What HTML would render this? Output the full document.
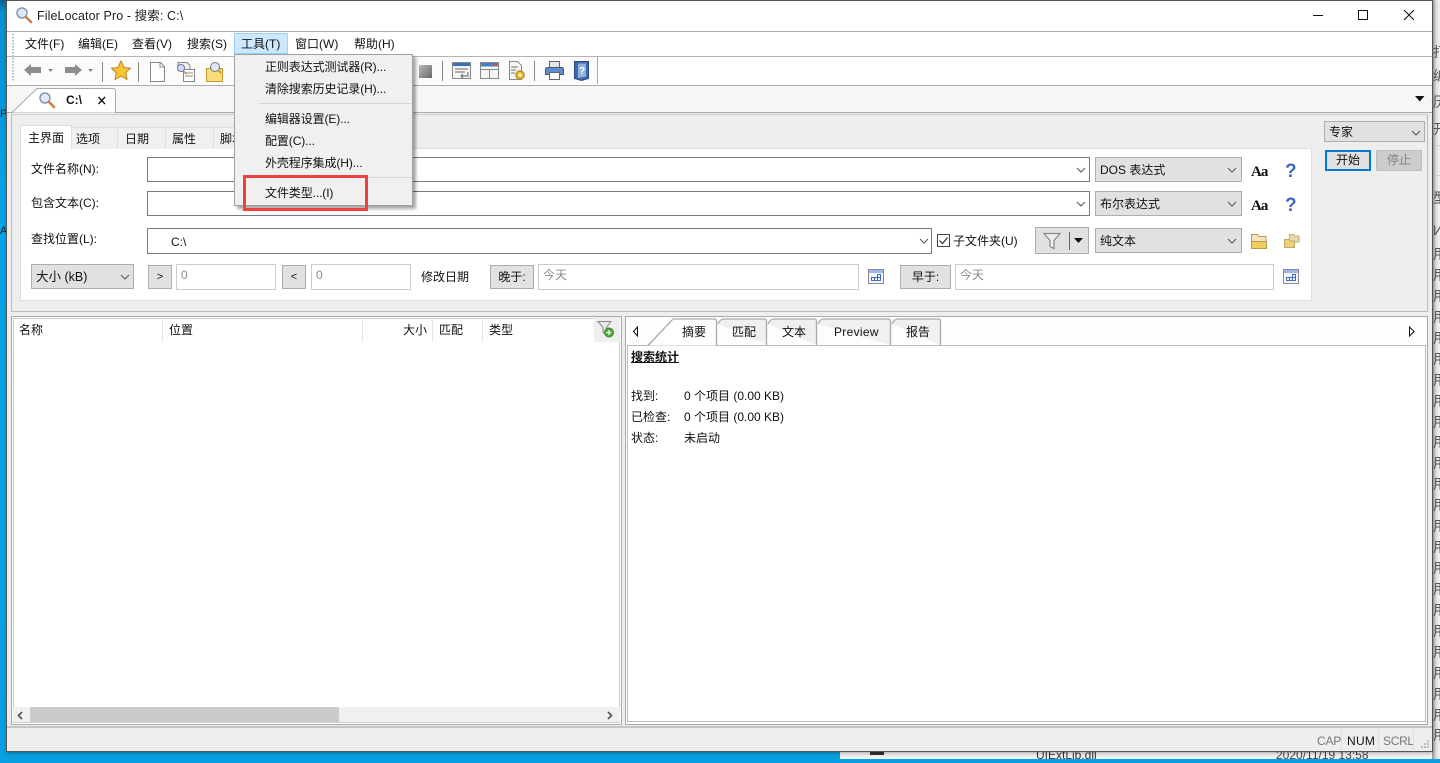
<!DOCTYPE html>
<html lang="zh"><head><meta charset="utf-8"><title>FileLocator Pro</title>
<style>
html,body{margin:0;padding:0}
body{width:1440px;height:759px;overflow:hidden;position:relative;background:#0a9fe2;font-family:"Liberation Sans","Noto Sans CJK SC",sans-serif;font-size:12px;color:#111}
.a,.t,svg.a{position:absolute}
.t{white-space:nowrap;line-height:16px}
.sel{position:absolute;background:#e1e1e1;border:1px solid #adadad;box-sizing:border-box;white-space:nowrap;padding-left:4px}
.inp{position:absolute;background:#fff;border:1px solid #7a7a7a;box-sizing:border-box}
.dis{position:absolute;background:#fff;border:1px solid #ccc;box-sizing:border-box;color:#8a8a8a;padding-left:4px;line-height:21px}
.btn{position:absolute;background:#e1e1e1;border:1px solid #adadad;box-sizing:border-box;text-align:center}
.tab{position:absolute;box-sizing:border-box;text-align:center;white-space:nowrap;overflow:hidden}
.mi{position:absolute;left:265px;white-space:nowrap;line-height:16px;letter-spacing:-.1px}
</style></head><body>
<!-- desktop behind -->
<div class="a" style="left:0;top:0;width:7px;height:759px;background:linear-gradient(#0b5f8a 0,#0a8fd0 12px,#04a3e8 200px,#0a9fe2)"></div>
<div class="a" style="left:0;top:751px;width:840px;height:8px;background:#0aa0e0"></div>
<div class="a" style="left:840px;top:751px;width:600px;height:8px;background:#f4f4f4"></div>
<div class="a" style="left:1432px;top:0;width:8px;height:759px;background:linear-gradient(90deg,#8f8f8f,#dcdcdc 4px,#f2f2f2)"></div>
<div class="a" style="left:1436px;top:145px;width:4px;height:1px;background:#ccc"></div>
<div class="a" style="left:1436px;top:175px;width:4px;height:1px;background:#ccc"></div>
<div class="a" style="left:0;top:108px;font-size:11px;color:#222;width:7px;overflow:hidden">Po</div>
<div class="a" style="left:0;top:225px;font-size:11px;color:#222;width:7px;overflow:hidden">A</div>
<div class="t" style="left:1276px;top:747px;color:#444">2020/11/19 13:58</div>
<div class="t" style="left:1036px;top:747px;color:#333">UIExtLib.dll</div>
<div class="a" style="left:870px;top:751px;width:14px;height:4px;background:#333"></div>
<div class="a" style="left:1433px;top:0;width:7px;height:759px;overflow:hidden;color:#555;font-size:14px">
<div class="a" style="top:42px">打</div><div class="a" style="top:66px">编</div><div class="a" style="top:92px">历</div><div class="a" style="top:119px">开</div><div class="a" style="top:188px">型</div><div class="a" style="top:222px">И</div>
<div class="a" style="top:244px">用</div><div class="a" style="top:265px">用</div><div class="a" style="top:286px">用</div><div class="a" style="top:307px">用</div><div class="a" style="top:328px">用</div><div class="a" style="top:349px">用</div><div class="a" style="top:370px">用</div><div class="a" style="top:391px">用</div><div class="a" style="top:412px">用</div><div class="a" style="top:432px">用</div><div class="a" style="top:453px">用</div><div class="a" style="top:474px">用</div><div class="a" style="top:495px">用</div><div class="a" style="top:516px">用</div><div class="a" style="top:537px">用</div><div class="a" style="top:558px">用</div><div class="a" style="top:579px">用</div><div class="a" style="top:600px">用</div><div class="a" style="top:621px">用</div><div class="a" style="top:642px">用</div><div class="a" style="top:663px">用</div><div class="a" style="top:684px">用</div><div class="a" style="top:705px">用</div><div class="a" style="top:725px">用</div></div>

<!-- window -->
<div class="a" style="left:7px;top:0;width:1425px;height:751px;background:#eee;box-shadow:0 0 0 1px #555,0 2px 4px rgba(0,0,0,.35);overflow:hidden"></div>
<div class="a" style="left:7px;top:0;width:1425px;height:31px;background:#fff;border-top:1px solid #555;box-sizing:border-box"></div>
<svg class="a" style="left:15px;top:6px" width="18" height="18" viewBox="0 0 18 18"><circle cx="7" cy="7" r="5" fill="#dfe8f8" stroke="#8a94b4" stroke-width="1.5"/><path d="M11 11l5 5" stroke="#c9824a" stroke-width="2.6" stroke-linecap="round"/></svg>
<div class="t" style="left:37px;top:8px;font-size:12.5px;letter-spacing:.1px;color:#222">FileLocator Pro - 搜索: C:\</div>
<svg class="a" style="left:1310px;top:8px" width="122" height="16" fill="none" stroke="#111"><path d="M3 7.500h10"/><rect x="48.500" y="2.500" width="9" height="9" stroke-width="1"/><path d="M94 2l10 10M104 2l-10 10"/></svg>
<div class="a" style="left:7px;top:31px;width:1425px;height:1px;background:#aaa"></div>
<!-- menubar -->
<div class="a" style="left:7px;top:32px;width:1425px;height:24px;background:#fff;border-bottom:1px solid #b4b4b4"></div>
<div class="a" style="left:12px;top:34px;width:2px;height:48px;background-image:linear-gradient(#bbb 50%,transparent 50%);background-size:2px 3px"></div>
<div class="a" style="left:234px;top:33px;width:52px;height:19px;background:#cce8ff;border:1px solid #99d1ff"></div>
<div class="t" style="left:25px;top:36px">文件(F)</div>
<div class="t" style="left:78px;top:36px">编辑(E)</div>
<div class="t" style="left:132px;top:36px">查看(V)</div>
<div class="t" style="left:187px;top:36px">搜索(S)</div>
<div class="t" style="left:241px;top:36px">工具(T)</div>
<div class="t" style="left:295px;top:36px">窗口(W)</div>
<div class="t" style="left:354px;top:36px">帮助(H)</div>
<!-- toolbar -->
<div class="a" style="left:7px;top:57px;width:1425px;height:28px;background:#fff;border-bottom:1px solid #aaa"></div>
<div class="a" style="left:14px;top:57px;width:583px;height:27px;background:#fbfbfb;border-right:1px solid #aaa"></div>
<div class="a" style="left:12px;top:34px;width:2px;height:48px;background-image:linear-gradient(#bbb 50%,transparent 50%);background-size:2px 3px"></div>
<svg class="a" style="left:20px;top:57px" width="590" height="28" viewBox="0 0 590 28">
<path d="M4 13l7-6v3h10v6H11v3z" fill="#8e8e8e"/><path d="M28 12l5 0-2.500 3z" fill="#888"/>
<path d="M62 13l-7-6v3H45v6h10v3z" fill="#8e8e8e"/><path d="M68 12l5 0-2.500 3z" fill="#888"/>
<path d="M82.500 5v20M118.500 5v20" stroke="#8a8a8a"/>
<path d="M101 4l3 6.500 6.500.8-4.800 4.400 1.300 6.800-6-3.400-6 3.400 1.300-6.800-4.800-4.400 6.500-.8z" fill="#fbc531" stroke="#b9822a"/>
<path d="M130.500 5.500h10l4 4v15h-14z" fill="#fff" stroke="#888"/><path d="M140 6v4h4" fill="none" stroke="#888"/>
<path d="M158 5.500h9l3 3v5h-12z" fill="#eee" stroke="#888"/><rect x="163.500" y="12.500" width="11" height="12" fill="#fff" stroke="#888"/><path d="M165 16h8M165 19h8" stroke="#888"/><circle cx="161" cy="11" r="3.500" fill="#cfe0f7" stroke="#6b7ba5"/><path d="M163.500 14l3 3" stroke="#c9824a" stroke-width="1.500"/>
<rect x="186.500" y="11.500" width="16" height="13" fill="#f7dc79" stroke="#c49a2a"/><circle cx="195" cy="10" r="4.500" fill="#dfe8f8" stroke="#777"/><path d="M198 13l3 3" stroke="#c9824a" stroke-width="1.500"/>
<defs><linearGradient id="g" x1="0" y1="0" x2="1" y2="1"><stop offset="0" stop-color="#bbb"/><stop offset="1" stop-color="#666"/></linearGradient></defs>
</svg>
<svg class="a" style="left:419px;top:65px" width="13" height="13"><rect width="13" height="13" fill="url(#g)"/></svg>
<div class="a" style="left:442px;top:61px;width:1px;height:20px;background:#8a8a8a"></div>
<div class="a" style="left:534px;top:61px;width:1px;height:20px;background:#8a8a8a"></div>
<svg class="a" style="left:450px;top:60px" width="145" height="22" viewBox="0 0 145 22">
<rect x="2.500" y="2.500" width="18" height="16" fill="#f5f5f5" stroke="#888"/><rect x="3" y="3" width="17" height="3" fill="#3a6fb5"/><path d="M5 9h13M5 12h10M18 12v4H11M13 14l-2 2 2 2" fill="none" stroke="#666"/>
<rect x="30.500" y="2.500" width="18" height="16" fill="#f5f5f5" stroke="#888"/><rect x="31" y="3" width="17" height="3.500" fill="#4a7cc0"/><rect x="44" y="4" width="3" height="1.500" fill="#d6552a"/><path d="M31 9.500h17M39.500 9.500v9" stroke="#888"/>
<path d="M59.500 1.500h8l4 4v14h-12z" fill="#f6f6f6" stroke="#888"/><path d="M61 7h7M61 10h5M61 13h4" stroke="#777"/><circle cx="70" cy="15" r="4" fill="#f0c53c" stroke="#b98f20" stroke-width="1.500"/><circle cx="70" cy="15" r="1.300" fill="#fff"/>
<path d="M99.500 7.500V1.500h10V7.500" fill="#dfe6f2" stroke="#666"/><path d="M95.500 9.500q0-2 2-2h14q2 0 2 2v5h-18z" fill="#5d8fd0" stroke="#555"/><rect x="99.500" y="12.500" width="10" height="7" fill="#fff" stroke="#666"/>
<path d="M124.500 1.500h14v17l-7 2-7-2z" fill="#3f68ad" stroke="#284a85"/><path d="M128 3.500h8v13l-8 1.500z" fill="#8fb2dd"/><text x="129" y="14" font-size="10" font-weight="bold" fill="#fff" font-family="Liberation Sans">?</text>
</svg>
<!-- doc tab strip -->
<div class="a" style="left:7px;top:86px;width:1425px;height:26px;background:#f6f6f6;border-bottom:1px solid #aaa"></div>
<svg class="a" style="left:10px;top:87px" width="112" height="27"><path d="M2 25.500L27 1.500H103q2.500 0 2.500 3V25.500" fill="#fff" stroke="#aaa"/></svg>
<svg class="a" style="left:38px;top:91px" width="18" height="18" viewBox="0 0 18 18"><circle cx="7" cy="7" r="5" fill="#dfe8f8" stroke="#8a94b4" stroke-width="1.500"/><path d="M11 11l5 5" stroke="#c9824a" stroke-width="2.600" stroke-linecap="round"/></svg>
<div class="t" style="left:66px;top:92px;font-weight:bold;color:#111">C:\</div>
<svg class="a" style="left:98px;top:96px" width="8" height="9"><path d="M.5 1l6.500 7M7 1L.5 8" stroke="#111" stroke-width="1.300"/></svg>
<svg class="a" style="left:1415px;top:96px" width="10" height="7"><path d="M0 0h9.500L4.800 5.500z" fill="#111"/></svg>
<!-- search panel -->
<div class="a" style="left:11px;top:114px;width:1417px;height:198px;box-sizing:border-box;border:1px solid #bbb;border-top-color:#ccc;background:#eee"></div>
<div class="a" style="left:20px;top:148px;width:1292px;height:153px;background:#fff;border:1px solid #ddd;box-sizing:border-box"></div>
<!-- tabs -->
<div class="tab" style="left:20px;top:125px;width:52px;height:24px;background:#fff;border:1px solid #ddd;border-bottom:0;line-height:24px">主界面</div>
<div class="tab" style="left:72px;top:127px;width:46px;height:22px;background:#f0f0f0;border-right:1px solid #ddd;border-top:1px solid #ddd;line-height:22px;text-align:left;padding-left:4px">选项</div>
<div class="tab" style="left:118px;top:127px;width:48px;height:22px;background:#f0f0f0;border-right:1px solid #ddd;border-top:1px solid #ddd;line-height:22px;text-align:left;padding-left:7px">日期</div>
<div class="tab" style="left:166px;top:127px;width:48px;height:22px;background:#f0f0f0;border-right:1px solid #ddd;border-top:1px solid #ddd;line-height:22px;text-align:left;padding-left:6px">属性</div>
<div class="tab" style="left:214px;top:127px;width:26px;height:22px;background:#f0f0f0;border-top:1px solid #ddd;line-height:22px;text-align:left;padding-left:6px">脚本</div>
<!-- rows -->
<div class="t" style="left:31px;top:161px">文件名称(N):</div>
<div class="t" style="left:31px;top:195px">包含文本(C):</div>
<div class="t" style="left:31px;top:231px">查找位置(L):</div>
<div class="inp" style="left:147px;top:157px;width:943px;height:25px"></div>
<div class="inp" style="left:147px;top:191px;width:943px;height:25px"></div>
<div class="inp" style="left:147px;top:228px;width:785px;height:26px"></div>
<div class="t" style="left:171px;top:234px">C:\</div>
<div class="a" style="left:937px;top:234px;width:13px;height:13px;box-sizing:border-box;border:1px solid #444;background:#fff"></div>
<svg class="a" style="left:937px;top:234px" width="13" height="13"><path d="M2.500 6.500l3 3 5-6" fill="none" stroke="#333" stroke-width="1.200"/></svg>
<div class="t" style="left:953px;top:233px">子文件夹(U)</div>
<div class="btn" style="left:1035px;top:227px;width:54px;height:27px"></div>
<svg class="a" style="left:1042px;top:231px" width="44" height="20"><path d="M2 2.500h16l-6 7v8l-4-2v-6z" fill="#efefef" stroke="#888" stroke-width="1.200"/><path d="M27.500 1v18" stroke="#666"/><path d="M32 7h9l-4.500 5z" fill="#111"/></svg>
<div class="sel" style="left:1095px;top:157px;width:147px;height:25px;line-height:24px">DOS 表达式</div>
<div class="sel" style="left:1095px;top:191px;width:147px;height:25px;line-height:24px">布尔表达式</div>
<div class="sel" style="left:1095px;top:228px;width:147px;height:25px;line-height:24px">纯文本</div>
<div class="sel" style="left:1324px;top:121px;width:101px;height:21px;line-height:20px">专家</div>
<div class="sel" style="left:31px;top:264px;width:103px;height:25px;line-height:24px;font-size:12.5px">大小 (kB)</div>
<svg class="a" style="left:0;top:0;pointer-events:none" width="1440" height="300" fill="none" stroke="#555">
<path d="M1077 168l4 4 4-4M1077 202l4 4 4-4M920 239l4 4 4-4M1228 168l4 4 4-4M1228 202l4 4 4-4M1228 239l4 4 4-4M1412 131l4 4 4-4M121 275l4 4 4-4"/>
</svg>
<div class="t" style="left:1251px;top:164px;font:bold 15px/16px 'Liberation Serif',serif;letter-spacing:-1px">Aa</div>
<div class="t" style="left:1251px;top:198px;font:bold 15px/16px 'Liberation Serif',serif;letter-spacing:-1px">Aa</div>
<div class="t" style="left:1285px;top:162px;font:bold 19px/20px 'Liberation Sans',sans-serif;color:#3f67c4">?</div>
<div class="t" style="left:1285px;top:196px;font:bold 19px/20px 'Liberation Sans',sans-serif;color:#3f67c4">?</div>
<svg class="a" style="left:1250px;top:233px" width="60" height="17"><path d="M1.500 1.500h6l1.500 2h7v12h-14.500z" fill="#f3e6c0" stroke="#b99a52"/><path d="M1.500 8.500h15v7h-15z" fill="#f4c95e" stroke="#b99a52"/><path d="M39.500 1.500h4l1 1.500h4.500v6h-9.500z" fill="#ecd9a6" stroke="#b8aa80"/><path d="M34.500 6.500h5l1 1.500h4v6.500h-10z" fill="#f5d06a" stroke="#b8aa80"/></svg>
<!-- start/stop -->
<div class="btn" style="left:1325px;top:150px;width:46px;height:21px;background:#e1e1e1;border:2px solid #0078d7;line-height:17px">开始</div>
<div class="btn" style="left:1376px;top:150px;width:46px;height:21px;background:#ccc;border-color:#bfbfbf;color:#838383;line-height:19px">停止</div>
<!-- size row -->
<div class="btn" style="left:148px;top:265px;width:24px;height:24px;line-height:23px;font-size:11px">&gt;</div>
<div class="dis" style="left:176px;top:264px;width:100px;height:26px">0</div>
<div class="btn" style="left:282px;top:265px;width:24px;height:24px;line-height:23px;font-size:11px">&lt;</div>
<div class="dis" style="left:311px;top:264px;width:100px;height:26px">0</div>
<div class="t" style="left:421px;top:269px">修改日期</div>
<div class="btn" style="left:490px;top:265px;width:44px;height:24px;line-height:23px">晚于:</div>
<div class="dis" style="left:538px;top:264px;width:321px;height:26px">今天</div>
<div class="btn" style="left:900px;top:265px;width:51px;height:24px;line-height:23px">早于:</div>
<div class="dis" style="left:955px;top:264px;width:319px;height:26px">今天</div>
<svg class="a" style="left:868px;top:268px" width="16" height="17"><rect x=".5" y="1.500" width="15" height="14" fill="#f4f6fb" stroke="#8a8a9a"/><rect x="1" y="2" width="14" height="3" fill="#9db5e5"/><path d="M5.500 9.500h3v3h-3zM8.500 9.500h3v3h-3zM2.500 9.500h3v3h-3zM8.500 6.500h3v3h-3z" fill="none" stroke="#3f6fc0" transform="translate(1 0)"/></svg>
<svg class="a" style="left:1283px;top:268px" width="16" height="17"><rect x=".5" y="1.500" width="15" height="14" fill="#f4f6fb" stroke="#8a8a9a"/><rect x="1" y="2" width="14" height="3" fill="#9db5e5"/><path d="M5.500 9.500h3v3h-3zM8.500 9.500h3v3h-3zM2.500 9.500h3v3h-3zM8.500 6.500h3v3h-3z" fill="none" stroke="#3f6fc0" transform="translate(1 0)"/></svg>
<!-- left list -->
<div class="a" style="left:11px;top:316px;width:611px;height:409px;box-sizing:border-box;border:1px solid #aaa;outline:1px solid #ccc;outline-offset:-3px;background:#fff"></div>
<div class="t" style="left:19px;top:322px">名称</div>
<div class="t" style="left:169px;top:322px">位置</div>
<div class="t" style="left:403px;top:322px">大小</div>
<div class="t" style="left:439px;top:322px">匹配</div>
<div class="t" style="left:489px;top:322px">类型</div>
<div class="a" style="left:162px;top:317px;width:1px;height:25px;background:#e5e5e5"></div>
<div class="a" style="left:362px;top:317px;width:1px;height:25px;background:#e5e5e5"></div>
<div class="a" style="left:432px;top:317px;width:1px;height:25px;background:#e5e5e5"></div>
<div class="a" style="left:482px;top:317px;width:1px;height:25px;background:#e5e5e5"></div>
<div class="a" style="left:594px;top:317px;width:26px;height:25px;background:#efefef"></div>
<svg class="a" style="left:597px;top:320px" width="20" height="20"><path d="M1 1.500h13l-4.500 6v7l-3.500-2v-5z" fill="#e8e8e8" stroke="#888"/><circle cx="12" cy="12.500" r="4.500" fill="#4ea83c" stroke="#3a8a2c"/><path d="M9.500 12.500h5M12 10v5" stroke="#fff" stroke-width="1.300"/></svg>
<div class="a" style="left:13px;top:707px;width:607px;height:15px;background:#f0f0f0"></div>
<div class="a" style="left:30px;top:707px;width:309px;height:15px;background:#cbcbcb"></div>
<svg class="a" style="left:16px;top:711px" width="600" height="10" fill="none" stroke="#505050" stroke-width="1.600"><path d="M6 1L2.500 4.500 6 8M592 1l3.500 3.500L592 8"/></svg>
<!-- right pane -->
<div class="a" style="left:625px;top:316px;width:803px;height:409px;box-sizing:border-box;border:1px solid #aaa;background:#fdfdfd"></div>
<div class="a" style="left:627px;top:345px;width:799px;height:377px;box-sizing:border-box;border:1px solid #bbb;background:#fff"></div>
<svg class="a" style="left:632px;top:326px" width="8" height="11"><path d="M5.500 1L1.500 5.500 5.500 10z" fill="#fff" stroke="#111"/></svg>
<svg class="a" style="left:1408px;top:326px" width="8" height="11"><path d="M1.500 1L6 5.500 1.500 10z" fill="#fff" stroke="#111"/></svg>
<svg class="a" style="left:645px;top:318px" width="300" height="28" fill="#f0f0f0" stroke="#aaa" stroke-width="1.300">
<path d="M3 27.500L28 1h41q2.500 0 2.500 2.500V27.500" fill="#fff"/>
<path d="M73 6q2-5 6-5h40q2.500 0 2.500 2.500V27"/>
<path d="M123 6q2-5 6-5h40q2.500 0 2.500 2.500V27"/>
<path d="M173 6q2-5 6-5h64q2.500 0 2.500 2.500V27"/>
<path d="M247 6q2-5 6-5h40q2.500 0 2.500 2.500V27"/>
</svg>
<div class="t" style="left:682px;top:324px">摘要</div>
<div class="t" style="left:732px;top:324px">匹配</div>
<div class="t" style="left:782px;top:324px">文本</div>
<div class="t" style="left:834px;top:324px;letter-spacing:.3px">Preview</div>
<div class="t" style="left:906px;top:324px">报告</div>
<div class="t" style="left:631px;top:349px;font-weight:bold;text-decoration:underline">搜索统计</div>
<div class="t" style="left:631px;top:388px">找到:</div><div class="t" style="left:684px;top:388px">0 个项目 (0.00 KB)</div>
<div class="t" style="left:631px;top:409px">已检查:</div><div class="t" style="left:684px;top:409px">0 个项目 (0.00 KB)</div>
<div class="t" style="left:631px;top:430px">状态:</div><div class="t" style="left:684px;top:430px">未启动</div>
<!-- status bar -->
<div class="a" style="left:7px;top:726px;width:1425px;height:2px;background:#c4c4c4"></div>
<div class="t" style="left:1317px;top:733px;color:#777;letter-spacing:-.2px">CAP</div>
<div class="t" style="left:1347px;top:733px;color:#111;letter-spacing:.3px">NUM</div>
<div class="t" style="left:1383px;top:733px;color:#777;letter-spacing:-.3px">SCRL</div>
<div class="a" style="left:1341px;top:730px;width:1px;height:20px;background:#ddd"></div>
<div class="a" style="left:1378px;top:730px;width:1px;height:20px;background:#ddd"></div>
<div class="a" style="left:1413px;top:730px;width:1px;height:20px;background:#ddd"></div>
<svg class="a" style="left:1421px;top:740px" width="9" height="9" fill="#bbb"><path d="M6 0h2v2H6zM3 3h2v2H3zM6 3h2v2H6zM0 6h2v2H0zM3 6h2v2H3zM6 6h2v2H6z"/></svg>
<!-- menu -->
<div class="a" style="left:234px;top:54px;width:179px;height:152px;box-sizing:border-box;background:#f0f0f0;border:1px solid #a0a0a0;box-shadow:3px 3px 3px rgba(0,0,0,.35)"></div>
<div class="mi" style="top:59px">正则表达式测试器(R)...</div>
<div class="mi" style="top:81px">清除搜索历史记录(H)...</div>
<div class="a" style="left:259px;top:103px;width:153px;height:1px;background:#d4d4d4"></div>
<div class="mi" style="top:111px">编辑器设置(E)...</div>
<div class="mi" style="top:133px">配置(C)...</div>
<div class="mi" style="top:155px">外壳程序集成(H)...</div>
<div class="a" style="left:259px;top:177px;width:153px;height:1px;background:#d4d4d4"></div>
<div class="mi" style="top:185px">文件类型...(I)</div>
<div class="a" style="left:243px;top:175px;width:125px;height:36px;box-sizing:border-box;border:3px solid #ef3f3f"></div>
</body></html>
